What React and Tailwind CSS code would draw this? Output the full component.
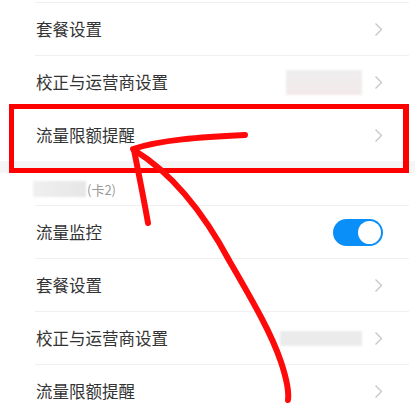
import React from "react";

const Chevron = () => (
  <svg width="9" height="15" viewBox="0 0 9 15" className="shrink-0">
    <path d="M1.5 1.5 L7.5 7.5 L1.5 13.5" fill="none" stroke="#c6c6c6" strokeWidth="1.3" />
  </svg>
);

const Row = ({ label, right, chevron = true }) => (
  <div className="h-[53px] border-t border-[#efefef] flex items-center justify-between pl-[1px] pr-[26px]">
    <span className="text-[16.5px] text-[#333333] leading-none">{label}</span>
    <div className="flex items-center gap-[12px]">
      {right}
      {chevron && <Chevron />}
    </div>
  </div>
);

const Blur = ({ w, h, cls }) => (
  <div className={cls} style={{ width: w, height: h }} />
);

export default function App() {
  return (
    <div
      className="relative w-[415px] h-[413px] bg-white overflow-hidden"
      style={{ fontFamily: '"Noto Sans CJK SC", "Noto Sans", sans-serif' }}
    >
      <div className="h-[2px]" />
      <div className="pl-[35px] pr-[6px]">
        <Row label="套餐设置" />
        <Row
          label="校正与运营商设置"
          right={<Blur w={76} h={25} cls="bg-gradient-to-b from-[#eeeeee] to-[#f3eaea] blur-[1px]" />}
        />
        <Row label="流量限额提醒" />
      </div>
      <div className="h-[12px] bg-[#f5f5f5]" />
      <div className="h-[32px] flex items-center pl-[33px]">
        <div className="w-[53px] h-[16px] bg-gradient-to-r from-[#f0f0f0] to-[#e6e6e6] blur-[1px]" />
        <span className="text-[13px] text-[#9a9a9a] leading-none ml-[1px]">(卡2)</span>
      </div>
      <div className="pl-[35px] pr-[6px]">
        <Row
          label="流量监控"
          chevron={false}
          right={
            <div className="w-[50px] h-[27px] rounded-full bg-[#0a8ef7] flex items-center justify-end pr-[2px]">
              <div className="w-[23px] h-[23px] rounded-full bg-white" />
            </div>
          }
        />
        <Row label="套餐设置" />
        <Row
          label="校正与运营商设置"
          right={<Blur w={82} h={15} cls="bg-[#ebebeb] blur-[1px]" />}
        />
        <Row label="流量限额提醒" />
      </div>

      <div className="absolute left-[9px] top-[104px] w-[400px] h-[69px] border-[5px] border-[#ff0000] border-r-[6px]" />

      <svg className="absolute inset-0" width="415" height="413" viewBox="0 0 415 413">
        <g fill="none" stroke="#ff0a0a" strokeWidth="6" strokeLinecap="round" strokeLinejoin="round">
          <path d="M134 150 C175 175 205 215 230 262 C255 305 272 335 281 362 C287 380 289 392 288 400" />
          <path d="M133 149 C160 140 200 137 245 135" />
          <path d="M134 150 C140 180 144 200 148 223" />
        </g>
      </svg>
    </div>
  );
}
